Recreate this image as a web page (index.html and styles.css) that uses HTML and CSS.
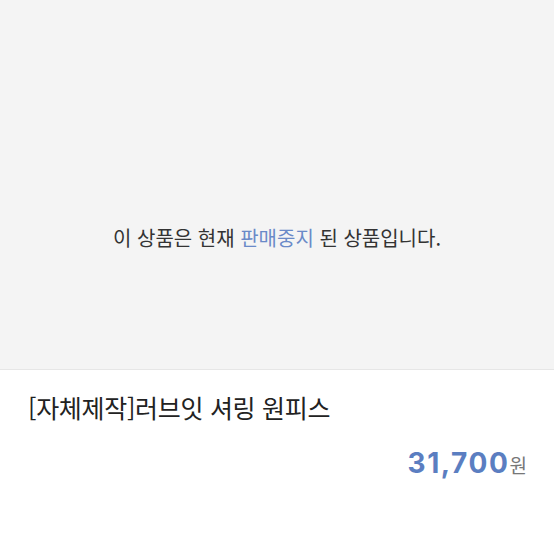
FILE: index.html
```html
<!DOCTYPE html>
<html lang="ko">
<head>
<meta charset="utf-8">
<link rel="stylesheet" href="styles.css">
</head>
<body>
<div class="page">
  <div class="notice">
    <p class="notice-text">이 상품은 현재 <span class="accent">판매중지</span> 된 상품입니다.</p>
  </div>
  <div class="info">
    <h1 class="title">[자체제작]러브잇 셔링 원피스</h1>
    <div class="price"><span class="amount">31,700</span><span class="unit">원</span></div>
  </div>
</div>
</body>
</html>
```

FILE: styles.css
```css
html, body {
  margin: 0;
  padding: 0;
  background: #ffffff;
}
.page {
  width: 554px;
  height: 554px;
  display: flex;
  flex-direction: column;
  font-family: "Noto Sans CJK KR", "Noto Sans", sans-serif;
}
.notice {
  height: 369px;
  background: #f4f4f4;
  border-bottom: 1px solid #e6e6e6;
  display: flex;
  align-items: center;
  justify-content: center;
}
.notice-text {
  margin: 0;
  font-size: 20px;
  color: #333333;
  letter-spacing: 0;
  padding-top: 105px;
}
.accent {
  color: #6a8ac8;
}
.info {
  padding: 18px 27px 0 28px;
  display: flex;
  flex-direction: column;
}
.title {
  margin: 0;
  font-size: 25px;
  font-weight: 400;
  color: #222222;
  letter-spacing: -0.3px;
  line-height: 38px;
}
.price {
  margin-top: 20px;
  align-self: flex-end;
  display: flex;
  align-items: baseline;
}
.amount {
  font-family: "Inter", "Noto Sans", sans-serif;
  font-size: 28px;
  font-weight: 700;
  color: #5b7ec1;
  letter-spacing: 1.6px;
}
.unit {
  font-size: 19px;
  color: #777777;
}
```
